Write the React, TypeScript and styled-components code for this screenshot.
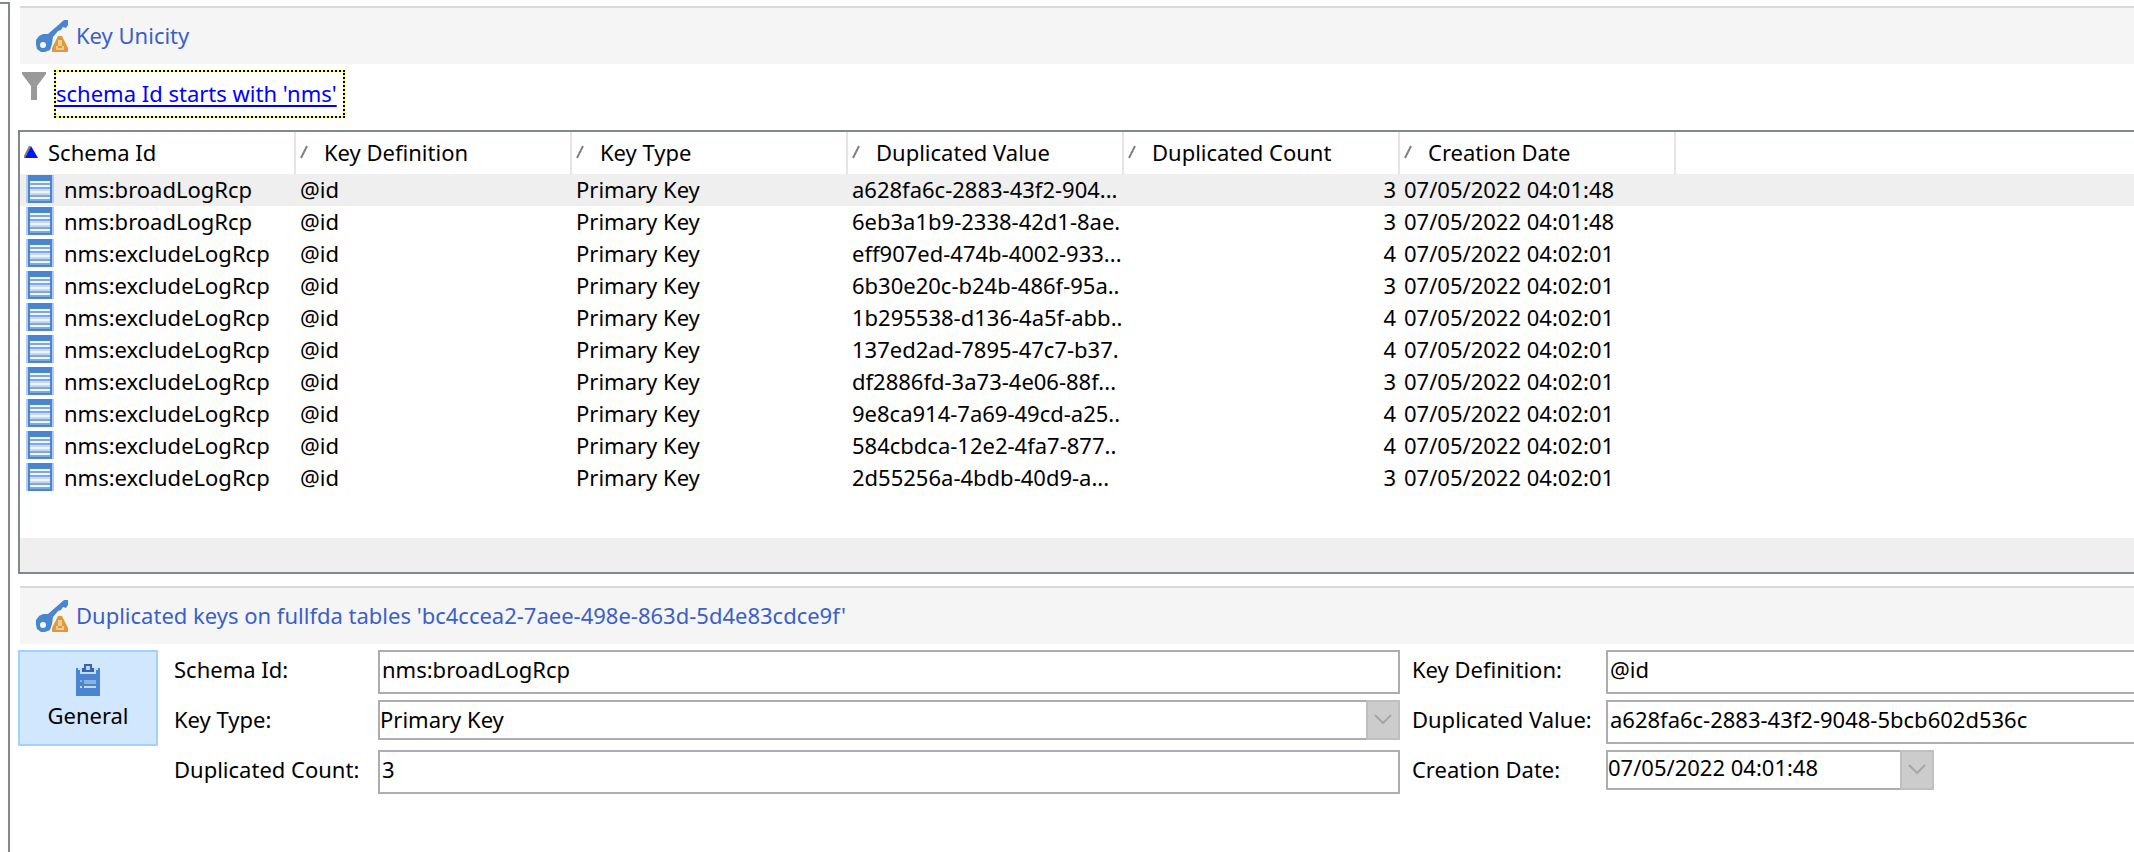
import React from "react";
import styled, { createGlobalStyle } from "styled-components";

const GlobalStyle = createGlobalStyle`
  * { box-sizing: border-box; }
  html, body, #root { height: 100%; }
  body {
    margin: 0;
    background: #fff;
    color: #000;
    font-family: "Noto Sans", "Open Sans", sans-serif;
    font-size: 22px;
    line-height: 30px;
    overflow: hidden;
  }
  input, select, button { font: inherit; color: inherit; border-radius: 0; margin: 0; }
`;

const Page = styled.div`
  display: flex;
  min-height: 100%;
  padding-top: 2px;
`;

const SidePane = styled.aside`
  flex: none;
  width: 10px;
  border-top: 2px solid #828790;
  border-right: 2px solid #828790;
`;

const Main = styled.main`
  flex: 1;
  min-width: 0;
  padding: 4px 0 0 8px;
`;

const TitleBar = styled.header`
  display: flex;
  align-items: center;
  gap: 8px;
  height: 58px;
  margin-left: 2px;
  padding-left: 16px;
  border-top: 2px solid #d9d9d9;
  background: #f5f5f5;
  color: #3a5fc8;
`;

const Title = styled.h2`
  margin: 0;
  padding-bottom: 2px;
  font-size: 22px;
  font-weight: 400;
  white-space: nowrap;
`;

const FilterBar = styled.div`
  display: flex;
  align-items: flex-start;
  gap: 8px;
  padding: 6px 0 12px 4px;
`;

const FilterLink = styled.a`
  height: 48px;
  padding: 6px 6px 0 0;
  border: 2px dotted #000;
  background: linear-gradient(#fff, #fff) padding-box, #ffff2e border-box;
  color: #0000ff;
  text-decoration-thickness: 2px;
  text-underline-offset: 3px;
  white-space: nowrap;
`;

const ListFrame = styled.section`
  display: flex;
  flex-direction: column;
  margin-bottom: 12px;
  border: 2px solid #828790;
  border-right: 0;
`;

const List = styled.table`
  width: 100%;
  margin-bottom: 44px;
  table-layout: fixed;
  border-collapse: separate;
  border-spacing: 0;
`;

const HeadCell = styled.th`
  width: 276px;
  height: 42px;
  padding: 0 0 2px 4px;
  border-right: 2px solid #e5e5e5;
  font-weight: 400;
  text-align: left;
  white-space: nowrap;
`;

const HeadRest = styled.td`
  padding: 0;
`;

const HeadContent = styled.span<{ $sorted?: boolean }>`
  display: flex;
  align-items: center;
  gap: ${(p) => (p.$sorted ? 10 : 16)}px;
`;

const Row = styled.tr<{ $selected?: boolean }>`
  height: 32px;
  background: ${(p) => (p.$selected ? "#efefef" : "#fff")};
`;

const Cell = styled.td<{ $right?: boolean }>`
  height: 32px;
  padding: 0 ${(p) => (p.$right ? 4 : 0)}px 2px 4px;
  text-align: ${(p) => (p.$right ? "right" : "left")};
  white-space: nowrap;
`;

const SchemaName = styled.span`
  display: flex;
  align-items: center;
  gap: 10px;
  padding-left: 2px;
`;

const ScrollTrack = styled.div`
  height: 34px;
  background: #efefef;
`;

const Details = styled.section`
  display: flex;
  align-items: flex-start;
  gap: 16px;
  padding-top: 6px;
`;

const TabButton = styled.button`
  display: flex;
  flex: none;
  flex-direction: column;
  align-items: center;
  gap: 4px;
  width: 140px;
  height: 96px;
  padding: 12px 0 0;
  border: 2px solid #a3d1ff;
  background: #d1e7fd;
`;

const Form = styled.form`
  display: grid;
  flex: 1;
  min-width: 0;
  grid-template-columns: 204px minmax(0, 60fr) 206px minmax(0, 31fr);
  grid-auto-rows: 44px;
  row-gap: 6px;
  align-items: start;
`;

const Label = styled.label<{ $second?: boolean }>`
  padding: 4px 0 0 ${(p) => (p.$second ? 12 : 0)}px;
  white-space: nowrap;
`;

const TextInput = styled.input<{ $open?: boolean }>`
  width: 100%;
  height: 44px;
  padding: 0 2px 6px;
  border: 2px solid #abadb3;
  border-right-width: ${(p) => (p.$open ? 0 : 2)}px;
  background: #fff;
  outline: none;
`;

const Picker = styled.div<{ $narrow?: boolean }>`
  position: relative;
  display: flex;
  width: ${(p) => (p.$narrow ? "328px" : "100%")};
  max-width: 100%;
  height: 40px;
`;

const Select = styled.select`
  width: 100%;
  padding: 0 0 2px;
  border: 2px solid #abadb3;
  background: #fff;
  appearance: none;
  outline: none;
`;

const SelectArrow = styled.span`
  position: absolute;
  top: 0;
  right: 0;
  bottom: 0;
  display: grid;
  place-items: center;
  width: 34px;
  border: 2px solid #bfbfbf;
  background: #cccccc;
  pointer-events: none;
`;

const DateInput = styled.input`
  flex: 1;
  min-width: 0;
  padding: 0 0 6px;
  border: 2px solid #abadb3;
  border-right: 0;
  outline: none;
`;

const DateButton = styled.button`
  display: grid;
  place-items: center;
  width: 34px;
  padding: 0;
  border: 2px solid #bfbfbf;
  background: #cccccc;
`;

const Drawing = styled.svg`
  display: block;
  flex: none;
`;

const KeyIcon = () => (
  <Drawing width="32" height="32" viewBox="0 0 32 32" aria-hidden="true">
    <path
      d="M28 0 H32 V5 L30 8 L27 7 L25 10 L22 11 L17 17 L16 24 L14 30 L9 32 H5 L1 29 L0 25 V20 L3 16 L7 14 L12 14 Z"
      fill="#4a86cf"
    />
    <circle cx="7" cy="25" r="3" fill="#f5f9fd" />
    <path d="M22 16 H26 L32 28 V32 H16 V28 Z" fill="#e0983a" />
    <path d="M22 20 H26 V26 H28 V30 H20 V26 H22 Z" fill="#eecb97" />
    <path d="M22 26 H26 V28 H22 Z" fill="#e0983a" />
  </Drawing>
);

const FunnelIcon = () => (
  <Drawing width="24" height="30" viewBox="0 0 24 30" aria-hidden="true">
    <path d="M0 2 H24 V4 L15 16 V30 H9 V16 L0 4 Z" fill="#999" />
  </Drawing>
);

const TableIcon = () => (
  <Drawing width="28" height="28" viewBox="0 0 28 28" shapeRendering="crispEdges" aria-hidden="true">
    <path d="M0 0 H28 V28 H0 Z" fill="#b5cdea" />
    <path d="M2 0 H26 V28 H2 Z" fill="#4a86cf" />
    <path d="M4 6 H24 V26 H4 Z" fill="#7fa9de" />
    <path d="M4 6 H24 V8 H4 Z M4 10 H24 V12 H4 Z M4 16 H24 V18 H4 Z M4 22 H24 V24 H4 Z" fill="#f2f6fc" />
    <path d="M4 14 H24 V16 H4 Z M4 18 H24 V20 H4 Z" fill="#c3d7f0" />
  </Drawing>
);

const ClipboardIcon = () => (
  <Drawing width="24" height="32" viewBox="0 0 24 32" aria-hidden="true">
    <path d="M0 4 H24 V32 H0 Z" fill="#4a86cf" />
    <path d="M2 4 H22 V6 H20 V10 H4 V6 H2 Z" fill="#c3dbf5" />
    <path d="M8 0 H16 V4 H18 V8 H6 V4 H8 Z" fill="#3766a8" />
    <path d="M10 2 H14 V6 H10 Z" fill="#b9d3f0" />
    <path d="M4 16 H6 V18 H4 Z M8 16 H20 V20 H8 Z" fill="#8bb3e2" />
    <path d="M4 22 H6 V24 H4 Z M8 22 H20 V24 H8 Z" fill="#c3dbf5" />
  </Drawing>
);

const SortedMark = () => (
  <Drawing width="14" height="12" viewBox="0 0 14 12" aria-hidden="true">
    <path d="M7 0 L14 12 H0 Z" fill="#0018f0" />
    <path d="M6 0 L0 12" stroke="#808080" strokeWidth="2" />
  </Drawing>
);

const SlashMark = () => (
  <Drawing width="8" height="14" viewBox="0 0 8 14" aria-hidden="true">
    <path d="M1 13 L7 1" stroke="#808080" strokeWidth="2" />
  </Drawing>
);

const Chevron = () => (
  <Drawing width="18" height="12" viewBox="0 0 18 12" aria-hidden="true">
    <path d="M1 1 L9 9 L17 1" fill="none" stroke="#a6a6a6" strokeWidth="2" />
  </Drawing>
);

const columns = ["Schema Id", "Key Definition", "Key Type", "Duplicated Value", "Duplicated Count", "Creation Date"];

const records: [string, string, number, string][] = [
  ["nms:broadLogRcp", "a628fa6c-2883-43f2-904...", 3, "07/05/2022 04:01:48"],
  ["nms:broadLogRcp", "6eb3a1b9-2338-42d1-8ae.", 3, "07/05/2022 04:01:48"],
  ["nms:excludeLogRcp", "eff907ed-474b-4002-933...", 4, "07/05/2022 04:02:01"],
  ["nms:excludeLogRcp", "6b30e20c-b24b-486f-95a..", 3, "07/05/2022 04:02:01"],
  ["nms:excludeLogRcp", "1b295538-d136-4a5f-abb..", 4, "07/05/2022 04:02:01"],
  ["nms:excludeLogRcp", "137ed2ad-7895-47c7-b37.", 4, "07/05/2022 04:02:01"],
  ["nms:excludeLogRcp", "df2886fd-3a73-4e06-88f...", 3, "07/05/2022 04:02:01"],
  ["nms:excludeLogRcp", "9e8ca914-7a69-49cd-a25..", 4, "07/05/2022 04:02:01"],
  ["nms:excludeLogRcp", "584cbdca-12e2-4fa7-877..", 4, "07/05/2022 04:02:01"],
  ["nms:excludeLogRcp", "2d55256a-4bdb-40d9-a...", 3, "07/05/2022 04:02:01"],
];

export default function App() {
  return (
    <>
      <GlobalStyle />
      <Page>
        <SidePane />
        <Main>
          <TitleBar>
            <KeyIcon />
            <Title>Key Unicity</Title>
          </TitleBar>
          <FilterBar>
            <FunnelIcon />
            <FilterLink href="#filter">schema Id starts with 'nms'</FilterLink>
          </FilterBar>
          <ListFrame>
            <List>
              <thead>
                <tr>
                  {columns.map((name, i) => (
                    <HeadCell key={name} scope="col">
                      <HeadContent $sorted={i === 0}>
                        {i === 0 ? <SortedMark /> : <SlashMark />}
                        {name}
                      </HeadContent>
                    </HeadCell>
                  ))}
                  <HeadRest />
                </tr>
              </thead>
              <tbody>
                {records.map(([schema, value, count, date], i) => (
                  <Row key={value} $selected={i === 0}>
                    <Cell>
                      <SchemaName>
                        <TableIcon />
                        {schema}
                      </SchemaName>
                    </Cell>
                    <Cell>@id</Cell>
                    <Cell>Primary Key</Cell>
                    <Cell>{value}</Cell>
                    <Cell $right>{count}</Cell>
                    <Cell>{date}</Cell>
                    <Cell />
                  </Row>
                ))}
              </tbody>
            </List>
            <ScrollTrack />
          </ListFrame>
          <TitleBar>
            <KeyIcon />
            <Title>Duplicated keys on fullfda tables 'bc4ccea2-7aee-498e-863d-5d4e83cdce9f'</Title>
          </TitleBar>
          <Details>
            <TabButton type="button">
              <ClipboardIcon />
              General
            </TabButton>
            <Form>
              <Label htmlFor="schema">Schema Id:</Label>
              <TextInput id="schema" defaultValue="nms:broadLogRcp" />
              <Label htmlFor="definition" $second>Key Definition:</Label>
              <TextInput id="definition" defaultValue="@id" $open />
              <Label htmlFor="type">Key Type:</Label>
              <Picker>
                <Select id="type" defaultValue="primary">
                  <option value="primary">Primary Key</option>
                </Select>
                <SelectArrow><Chevron /></SelectArrow>
              </Picker>
              <Label htmlFor="value" $second>Duplicated Value:</Label>
              <TextInput id="value" defaultValue="a628fa6c-2883-43f2-9048-5bcb602d536c" $open />
              <Label htmlFor="count">Duplicated Count:</Label>
              <TextInput id="count" defaultValue="3" />
              <Label htmlFor="created" $second>Creation Date:</Label>
              <Picker $narrow>
                <DateInput id="created" defaultValue="07/05/2022 04:01:48" />
                <DateButton type="button" aria-label="Choose date"><Chevron /></DateButton>
              </Picker>
            </Form>
          </Details>
        </Main>
      </Page>
    </>
  );
}
